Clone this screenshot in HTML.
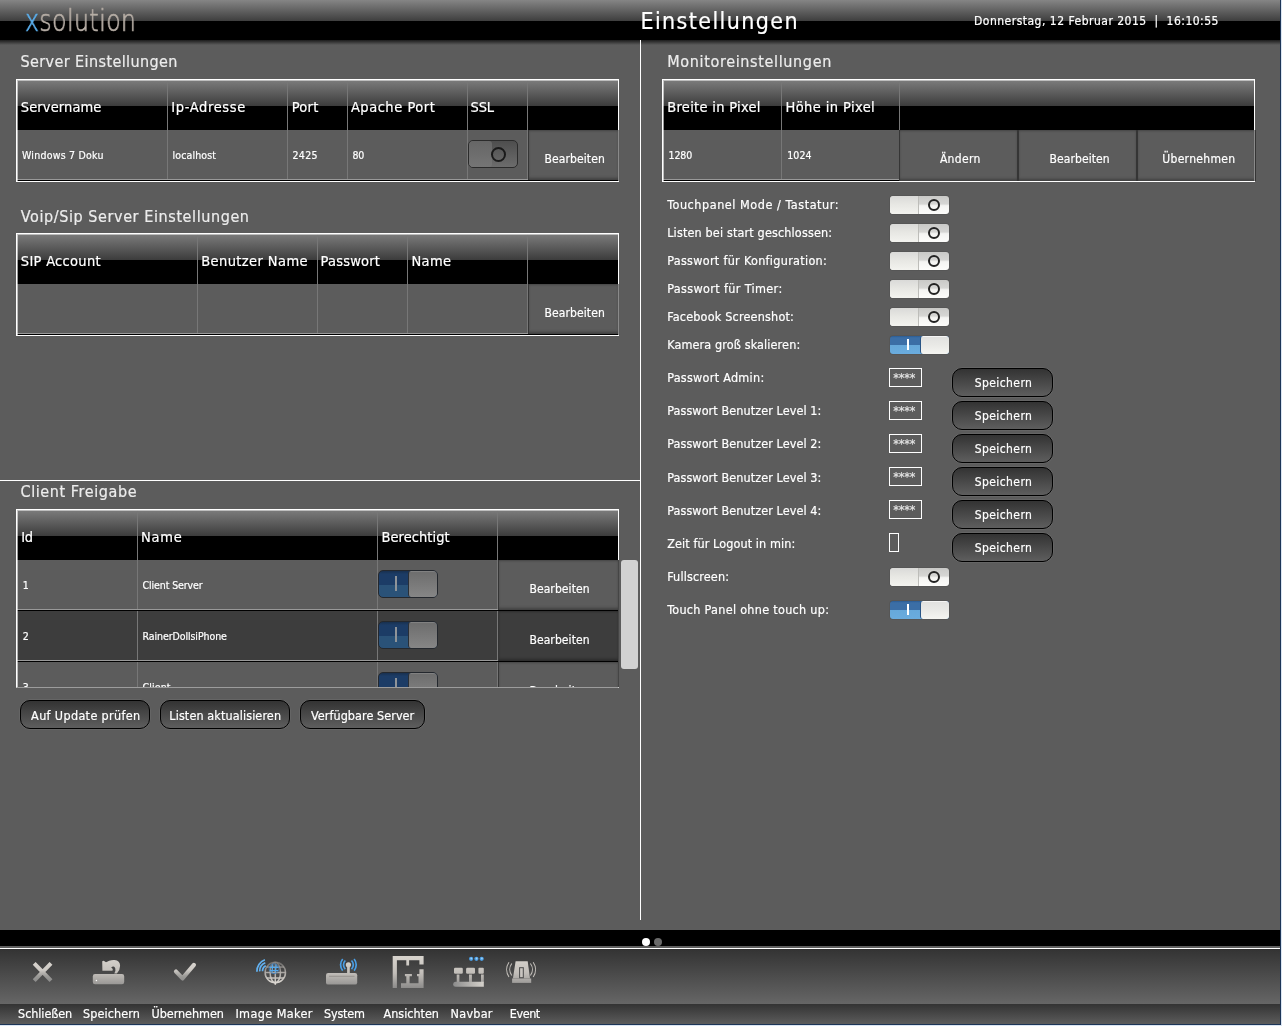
<!DOCTYPE html>
<html lang="de"><head><meta charset="utf-8"><title>Einstellungen</title>
<style>
html,body{margin:0;padding:0;background:#5c5c5c;overflow:hidden}
#app{position:relative;width:1282px;height:1026px;overflow:hidden;background:#5c5c5c;font-family:"DejaVu Sans Condensed","DejaVu Sans","Liberation Sans",sans-serif;font-stretch:condensed}
#app div,#app span,#app svg{position:absolute;box-sizing:border-box}
span.t{white-space:pre;-webkit-text-stroke:.2px}
.hdr{left:0;top:0;width:1280px;height:40px;background:linear-gradient(#858585 0,#3e3e3e 21px,#000 21px)}
.hdrsh{left:0;top:40px;width:1280px;height:5px;background:linear-gradient(#1c1c1c,#5c5c5c)}
.edgeR1{left:1280px;top:0;width:1px;height:1026px;background:#1d3557}
.edgeR2{left:1281px;top:0;width:1px;height:1026px;background:#dbe6f3}
.edgeB1{left:0;top:1024px;width:1281px;height:1px;background:#1d3557}
.edgeB2{left:0;top:1025px;width:1282px;height:1px;background:#dbe6f3}
.vline{left:640px;top:40px;width:1px;height:880px;background:#fff}
.hline{left:0;top:480px;width:640px;height:1px;background:#fff}
.tbl{border:1px solid #fff}
.th{left:0;top:0;right:0;height:50px;background:linear-gradient(#7c7c7c 0,#3c3c3c 26px,#000 26px)}
.vs{top:0;bottom:0;width:1px;background:#777}
.rowb1{left:0;right:0;height:1px;background:#999}
.rowb2{left:0;right:0;height:1px;background:#000}
.cbtn{background:#5c5c5c;box-shadow:inset 0 -3px 3px -1px rgba(0,0,0,.3),inset 0 2px 2px -1px rgba(0,0,0,.25);border-left:1px solid #353535;border-right:1px solid #353535}
.bbar{left:0;top:930px;width:1280px;height:16px;background:#000}
.bl1{left:0;top:946px;width:1280px;height:2px;background:#5e5e5e}
.bl2{left:0;top:948px;width:1280px;height:1px;background:#fff}
.tb1{left:0;top:949px;width:1280px;height:55px;background:linear-gradient(#333,#666)}
.tb2{left:0;top:1004px;width:1280px;height:20px;background:linear-gradient(#333,#5c5c5c)}
.dot{width:8px;height:8px;border-radius:4px;top:938px}
.pbtn{border:1px solid #000;border-radius:10px;background:linear-gradient(#333,#5e5e5e);box-shadow:0 0 0 .5px rgba(255,255,255,.12)}
.pw{border:1px solid #fff;width:33px;height:19px}
/* light toggles */
.tg{width:59px;height:18px;border-radius:3px;overflow:hidden;box-shadow:0 0 1px rgba(0,0,0,.6)}
.tg.off{background:linear-gradient(#c9c9c7 0,#d6d6d4 44%,#f4f4f2 54%,#fdfdfb 100%)}
.tg.off i{position:absolute;left:0;top:0;width:28px;height:18px;background:linear-gradient(#dadad8,#e8e8e4 50%,#f3f3ef);border-right:1px solid #bdbdb9;border-radius:3px 0 0 3px}
.tg.off b{position:absolute;left:37.5px;top:2.5px;width:12px;height:12px;border:2px solid #222;border-radius:6px;box-sizing:border-box}
.tg.on{background:linear-gradient(#2b5b92 0,#3b6ea6 10%,#3b6ea6 50%,#66a8da 50%,#6aacde 100%)}
.tg.on i{position:absolute;left:30px;top:0;width:29px;height:18px;background:linear-gradient(#fff 0,#e2e2e0 8%,#e9e9e6 50%,#f5f5f1);border-radius:3px;border-left:1px solid #2a5585}
.tg.on b{position:absolute;left:17px;top:3px;width:2px;height:11px;background:#fff}
/* dark toggles */
.row2{background:#3d3d3d}
.cbtn.dk{background:#3d3d3d}
.sb{background:#d2d2d2;border-radius:3px}
.dg{width:60px;height:28px;border-radius:5px;border:1px solid #24282e;overflow:hidden}
.dg.don{background:linear-gradient(#18304f 0,#1c3c66 12%,#1c3c66 52%,#2a5278 52%,#2a5278 100%)}
.dg.don i{position:absolute;left:29px;top:0;width:29px;height:26px;background:linear-gradient(#8a8a8a 0,#6e6e6e 6%,#868686);border-left:1px solid #2a2f36;border-radius:3px}
.dg.don b{position:absolute;left:16px;top:5px;width:2px;height:15px;background:#8f9499}
.dg.doff{width:50px;border-color:#2b2b2b;background:linear-gradient(#4e4e4e,#6c6c6c)}
.dg.doff i{position:absolute;left:0;top:0;width:23px;height:26px;background:linear-gradient(#666,#757575);border-radius:3px}
.dg.doff b{position:absolute;left:22px;top:5.5px;width:15px;height:15px;border:2px solid #1a1a1a;border-radius:8px;box-sizing:border-box}
.clip3{left:0;top:0;width:1282px;height:687px;overflow:hidden}
.logo{will-change:transform;font-stretch:normal;left:25px;top:3px;font-family:"DejaVu Sans Light","DejaVu Sans","Liberation Sans",sans-serif;font-weight:200;font-size:30px;line-height:35px;color:#b7aea6;white-space:pre;-webkit-text-stroke:.7px;letter-spacing:.6px;transform:scaleX(.785);transform-origin:0 0}
.t3{border-bottom-color:#9c9c9c}
.t3r{left:618px;top:560px;width:1px;height:127px;background:#454545}
.txt{left:0;top:0;width:1282px;height:1026px;will-change:transform}
.rb{width:1px;background:#8a8a8a}
.tbl::after{content:"";position:absolute;left:0;top:0;right:0;bottom:0;border-left:1px solid rgba(255,255,255,.6);border-top:1px solid rgba(255,255,255,.5);pointer-events:none}

</style></head><body>
<div id="app">
<div class="hdr"></div><div class="hdrsh"></div>
<div class="vline"></div><div class="hline"></div>
<span class="logo"><span style="position:static;color:#5aaeec">x</span>solution</span>
<div class="tbl" style="left:16px;top:79px;width:603px;height:103px">
<div class="th"></div>
<div class="vs" style="left:150px"></div>
<div class="vs" style="left:270px"></div>
<div class="vs" style="left:330px"></div>
<div class="vs" style="left:450px"></div>
<div class="vs" style="left:510px"></div>
<div class="rowb1" style="top:99px"></div><div class="rowb2" style="top:100px"></div>
<div class="cbtn" style="left:511px;top:50px;width:91px;height:50px"></div>
<div class="dg doff" style="left:451px;top:60px"><i></i><b></b></div>
</div>
<div class="tbl" style="left:16px;top:233px;width:603px;height:103px">
<div class="th"></div>
<div class="vs" style="left:180px"></div>
<div class="vs" style="left:300px"></div>
<div class="vs" style="left:390px"></div>
<div class="vs" style="left:510px"></div>
<div class="rowb1" style="top:99px"></div><div class="rowb2" style="top:100px"></div>
<div class="cbtn" style="left:511px;top:50px;width:91px;height:50px"></div>
</div>
<div class="tbl t3" style="left:16px;top:509px;width:603px;height:179px;overflow:hidden">
<div class="row2" style="left:0;right:0;top:101px;height:51px"></div>
<div class="th"></div>
<div class="vs" style="left:120px"></div>
<div class="vs" style="left:360px"></div>
<div class="vs" style="left:480px"></div>
<div class="rowb1" style="top:99px"></div><div class="rowb2" style="top:100px"></div>
<div class="cbtn" style="left:481px;top:50px;width:121px;height:50px"></div>
<div class="dg don" style="left:361px;top:60px"><i></i><b></b></div>
<div class="rowb1" style="top:150px"></div><div class="rowb2" style="top:151px"></div>
<div class="cbtn dk" style="left:481px;top:101px;width:121px;height:50px"></div>
<div class="dg don" style="left:361px;top:111px"><i></i><b></b></div>
<div class="rowb1" style="top:201px"></div><div class="rowb2" style="top:202px"></div>
<div class="cbtn" style="left:481px;top:152px;width:121px;height:50px"></div>
<div class="dg don" style="left:361px;top:162px"><i></i><b></b></div>
</div>
<div class="t3r"></div>
<div class="sb" style="left:621px;top:560px;width:17px;height:109px"></div>
<div class="tbl" style="left:662px;top:79px;width:593px;height:103px">
<div class="th"></div>
<div class="vs" style="left:118px"></div>
<div class="vs" style="left:236px"></div>
<div class="rowb1" style="top:99px;width:237px;right:auto"></div><div class="rowb2" style="top:100px;width:237px;right:auto"></div>
<div class="cbtn" style="left:236px;top:50px;width:119px;height:51px"></div>
<div class="cbtn" style="left:355px;top:50px;width:119px;height:51px"></div>
<div class="cbtn" style="left:474px;top:50px;width:119px;height:51px"></div>
</div>
<div class="rb" style="left:618px;top:130px;height:51px"></div>
<div class="rb" style="left:618px;top:284px;height:51px"></div>
<div class="rb" style="left:1254px;top:130px;height:51px"></div>
<div class="tg off" style="left:890px;top:196px"><i></i><b></b></div>
<div class="tg off" style="left:890px;top:224px"><i></i><b></b></div>
<div class="tg off" style="left:890px;top:252px"><i></i><b></b></div>
<div class="tg off" style="left:890px;top:280px"><i></i><b></b></div>
<div class="tg off" style="left:890px;top:308px"><i></i><b></b></div>
<div class="tg on" style="left:890px;top:336px"><i></i><b></b></div>
<div class="tg off" style="left:890px;top:568px"><i></i><b></b></div>
<div class="tg on" style="left:890px;top:601px"><i></i><b></b></div>
<div class="pw" style="left:889px;top:368px"></div>
<div class="pw" style="left:889px;top:401px"></div>
<div class="pw" style="left:889px;top:434px"></div>
<div class="pw" style="left:889px;top:467px"></div>
<div class="pw" style="left:889px;top:500px"></div>
<div class="pw" style="left:889px;top:533px;width:10px;height:19px"></div>
<div class="pbtn" style="left:952px;top:368px;width:101px;height:29px"></div>
<div class="pbtn" style="left:952px;top:401px;width:101px;height:29px"></div>
<div class="pbtn" style="left:952px;top:434px;width:101px;height:29px"></div>
<div class="pbtn" style="left:952px;top:467px;width:101px;height:29px"></div>
<div class="pbtn" style="left:952px;top:500px;width:101px;height:29px"></div>
<div class="pbtn" style="left:952px;top:533px;width:101px;height:29px"></div>
<div class="pbtn" style="left:20px;top:700px;width:130px;height:29px"></div>
<div class="pbtn" style="left:160px;top:700px;width:130px;height:29px"></div>
<div class="pbtn" style="left:300px;top:700px;width:125px;height:29px"></div>
<div class="bbar"></div><div class="bl1"></div><div class="bl2"></div><div class="tb1"></div><div class="tb2"></div>
<div class="dot" style="left:642px;background:#fff"></div><div class="dot" style="left:654px;background:#6a6a6a"></div>
<svg class="ico" style="left:0;top:949px" width="1280" height="55" viewBox="0 949 1280 55">
<defs>
<linearGradient id="ig" gradientUnits="userSpaceOnUse" x1="0" y1="958" x2="0" y2="988"><stop offset="0" stop-color="#d6d2cc"/><stop offset=".5" stop-color="#c2beb9"/><stop offset="1" stop-color="#8c8b8a"/></linearGradient>
<linearGradient id="ig2" gradientUnits="userSpaceOnUse" x1="0" y1="961" x2="0" y2="983"><stop offset="0" stop-color="#d9d5cf"/><stop offset=".42" stop-color="#cdc9c4"/><stop offset=".68" stop-color="#9c9b98"/><stop offset="1" stop-color="#878787"/></linearGradient>
<linearGradient id="ih" gradientUnits="userSpaceOnUse" x1="453" y1="0" x2="484" y2="0"><stop offset="0" stop-color="#8c8c8c"/><stop offset="1" stop-color="#d6d2cc"/></linearGradient>
<linearGradient id="gg" gradientUnits="userSpaceOnUse" x1="0" y1="961" x2="0" y2="984"><stop offset="0" stop-color="#8a8885" stop-opacity=".55"/><stop offset=".5" stop-color="#b4b0ac" stop-opacity=".9"/><stop offset="1" stop-color="#e0dcd6"/></linearGradient>
</defs>
<!-- close -->
<g stroke="url(#ig2)" stroke-width="4" stroke-linecap="butt" fill="none">
<path d="M34.2 963.3L51 980.7M51 963.3L34.2 980.7"/>
</g>
<!-- save -->
<g fill="url(#ig)">
<path d="M95 974h27q2.2 0 2.2 2.4v5.500q0 2.300-2.200 2.300H95q-2.200 0-2.200-2.300v-5.500q0-2.400 2.200-2.400z"/>
<path d="M102.2 961.2l1.500-.5 2.300 1.600 3.200-1.600q2.700-.9 5.300-.7 5.600.6 5.600 5.800 0 4.300-3.200 7.800h-2.600q1.700-2.700 1-5.100-.6-1.800-1.800-2-1.300-.1-2.300 1l1.600 1.500-.3 1.800h-10.100z"/>
</g>
<circle cx="96.4" cy="980.5" r=".7" fill="#fff"/>
<!-- apply -->
<path d="M176 971.600l6.500 6.800 11.400-13.500" stroke="url(#ig2)" stroke-width="4.2" stroke-linecap="round" stroke-linejoin="round" fill="none"/>
<!-- image maker -->
<g fill="none" stroke="url(#gg)" stroke-width="1.500">
<circle cx="275.3" cy="972.5" r="10.2"/>
<ellipse cx="275.3" cy="972.5" rx="5.2" ry="10.2"/>
<path d="M275.3 962.3v22.500M265.1 972.5h20.400M266.700 967h17.200M266.700 978h17.200"/>
</g>
<g fill="none" stroke="#55a8ea" stroke-width="1.200">
<circle cx="274" cy="968.7" r="4.900" stroke="#3f7fc0" stroke-width="1" stroke-opacity=".8"/>
<path d="M269.600 967.300h8.800M269.800 970.500h8.400M272.800 964.600l-.8 7.800M276.200 964.600l-.8 7.800"/>
<path d="M264.900 959.800a12 12 0 0 0-8 11.900M265.300 962.800a9 9 0 0 0-5.600 8.600M265.800 965.800a6 6 0 0 0-3.300 5.400" stroke-width="1.700" stroke="#62b1f0"/>
</g>
<!-- system -->
<g fill="url(#ig)">
<rect x="326" y="973" width="31.2" height="11.6" rx="2.2"/>
<rect x="347.1" y="966" width="2.7" height="8"/>
<circle cx="348.4" cy="964.8" r="2.6"/>
</g>
<path d="M329 976.300h25.5" stroke="#8f8c88" stroke-width=".8"/>
<g fill="none" stroke="#4a9fe6" stroke-width="1.700">
<path d="M345.3 960.500a6 6 0 0 0 0 8.600M342.7 959a9 9 0 0 0 0 11.600M351.5 960.500a6 6 0 0 1 0 8.600M354.1 959a9 9 0 0 1 0 11.6"/>
</g>
<!-- ansichten -->
<g fill="url(#ig)">
<path d="M392.7 956.100h30.900v8.400h-4.200v-4.200h-10.300v5.100h-2.800v-5.100h-9.400v27.600h-4.200z"/>
<path d="M419.4 969.200h4.200v18.700h-22.600v-4.700h5.300v-7h-1.400v-2.300h7v2.300h-2.300v7h8.900v-7h-1.500v-2.300h2.400z"/>
</g>
<!-- navbar -->
<g fill="url(#ig)">
<rect x="454" y="967.8" width="8.8" height="6" rx="1.3"/>
<rect x="466.1" y="967.8" width="8.9" height="6" rx="1.3"/>
<rect x="478.4" y="967.8" width="5.4" height="6" rx="1"/>
<rect x="456.7" y="974.5" width="2.7" height="8"/>
<rect x="469" y="974.5" width="2.9" height="8"/>
<rect x="481" y="974.5" width="2.8" height="8"/>
</g>
<path d="M455.7 981.800h28.100v5h-28.100q-2.5 0-2.5-2.500t2.5-2.500z" fill="url(#ih)"/>
<g fill="#4a9fe6"><circle cx="471.1" cy="958.8" r="2.1"/><circle cx="476.4" cy="958.8" r="2.1"/><circle cx="481.7" cy="958.8" r="2.1"/></g>
<g fill="#9fd0f5"><circle cx="471.3" cy="958.5" r=".9"/><circle cx="476.6" cy="958.5" r=".9"/><circle cx="481.9" cy="958.5" r=".9"/></g>
<!-- event -->
<g fill="url(#ig)">
<path d="M515.6 961.300h12.100l2.3 17.200h-17.100z"/>
<rect x="512.1" y="978.5" width="19.1" height="4.4"/>
</g>
<rect x="519.6" y="967.7" width="3.7" height="10" fill="#c9c5c0" stroke="#4a4a4a" stroke-width="1"/>
<g fill="none" stroke="#c4c0bb" stroke-width="1.1">
<path d="M511.8 963.500a10 10 0 0 0 0 12M509 962.200a13 13 0 0 0 0 14.800M530.4 963.500a10 10 0 0 1 0 12M533.2 962.200a13 13 0 0 1 0 14.8"/>
</g>
</svg>

<div class="edgeR1"></div><div class="edgeR2"></div><div class="edgeB1"></div><div class="edgeB2"></div>
<div class="txt">
<span class="t" style="left:640.50px;top:8px;font-size:23px;line-height:26px;color:#fff;letter-spacing:1.392px;">Einstellungen</span>
<span class="t" style="left:974.00px;top:14px;font-size:12px;line-height:14px;color:#fff;letter-spacing:0.496px;">Donnerstag, 12 Februar 2015  |  16:10:55</span>
<span class="t" style="left:20.50px;top:52px;font-size:16px;line-height:19px;color:#ececec;letter-spacing:0.401px;">Server Einstellungen</span>
<span class="t" style="left:20.80px;top:207px;font-size:16px;line-height:19px;color:#ececec;letter-spacing:0.592px;">Voip/Sip Server Einstellungen</span>
<span class="t" style="left:20.50px;top:482px;font-size:16px;line-height:19px;color:#ececec;letter-spacing:0.589px;">Client Freigabe</span>
<span class="t" style="left:667.30px;top:52px;font-size:16px;line-height:19px;color:#ececec;letter-spacing:0.646px;">Monitoreinstellungen</span>
<span class="t" style="left:20.80px;top:99px;font-size:14.5px;line-height:16px;color:#fff;letter-spacing:0.119px;">Servername</span>
<span class="t" style="left:171.30px;top:99px;font-size:14.5px;line-height:16px;color:#fff;letter-spacing:0.648px;">Ip-Adresse</span>
<span class="t" style="left:291.70px;top:99px;font-size:14.5px;line-height:16px;color:#fff;letter-spacing:0.263px;">Port</span>
<span class="t" style="left:350.90px;top:99px;font-size:14.5px;line-height:16px;color:#fff;letter-spacing:0.528px;">Apache Port</span>
<span class="t" style="left:470.60px;top:99px;font-size:14.5px;line-height:16px;color:#fff;letter-spacing:-0.222px;">SSL</span>
<span class="t" style="left:22.00px;top:149px;font-size:10.5px;line-height:12px;color:#fff;letter-spacing:0.242px;">Windows 7 Doku</span>
<span class="t" style="left:172.50px;top:149px;font-size:10.5px;line-height:12px;color:#fff;letter-spacing:0.137px;">localhost</span>
<span class="t" style="left:292.40px;top:149px;font-size:10.5px;line-height:12px;color:#fff;letter-spacing:0.384px;">2425</span>
<span class="t" style="left:352.60px;top:149px;font-size:10.5px;line-height:12px;color:#fff;letter-spacing:-0.431px;">80</span>
<span class="t" style="left:544.40px;top:152px;font-size:12px;line-height:14px;color:#fff;letter-spacing:0.119px;">Bearbeiten</span>
<span class="t" style="left:20.80px;top:253px;font-size:14.5px;line-height:16px;color:#fff;letter-spacing:0.302px;">SIP Account</span>
<span class="t" style="left:201.20px;top:253px;font-size:14.5px;line-height:16px;color:#fff;letter-spacing:0.408px;">Benutzer Name</span>
<span class="t" style="left:320.60px;top:253px;font-size:14.5px;line-height:16px;color:#fff;letter-spacing:0.209px;">Passwort</span>
<span class="t" style="left:411.50px;top:253px;font-size:14.5px;line-height:16px;color:#fff;letter-spacing:0.333px;">Name</span>
<span class="t" style="left:544.40px;top:306px;font-size:12px;line-height:14px;color:#fff;letter-spacing:0.119px;">Bearbeiten</span>
<span class="t" style="left:667.25px;top:99px;font-size:14.5px;line-height:16px;color:#fff;letter-spacing:0.299px;">Breite in Pixel</span>
<span class="t" style="left:785.50px;top:99px;font-size:14.5px;line-height:16px;color:#fff;letter-spacing:0.406px;">Höhe in Pixel</span>
<span class="t" style="left:668.50px;top:149px;font-size:10.5px;line-height:12px;color:#fff;letter-spacing:-0.099px;">1280</span>
<span class="t" style="left:787.25px;top:149px;font-size:10.5px;line-height:12px;color:#fff;letter-spacing:0.068px;">1024</span>
<span class="t" style="left:939.90px;top:152px;font-size:12px;line-height:14px;color:#fff;letter-spacing:0.341px;">Ändern</span>
<span class="t" style="left:1049.50px;top:152px;font-size:12px;line-height:14px;color:#fff;letter-spacing:0.097px;">Bearbeiten</span>
<span class="t" style="left:1162.30px;top:152px;font-size:12px;line-height:14px;color:#fff;letter-spacing:0.303px;">Übernehmen</span>
<span class="t" style="left:667.20px;top:197px;font-size:12.5px;line-height:15px;color:#fff;letter-spacing:0.550px;">Touchpanel Mode / Tastatur:</span>
<span class="t" style="left:667.20px;top:225px;font-size:12.5px;line-height:15px;color:#fff;letter-spacing:0.154px;">Listen bei start geschlossen:</span>
<span class="t" style="left:667.20px;top:253px;font-size:12.5px;line-height:15px;color:#fff;letter-spacing:0.303px;">Passwort für Konfiguration:</span>
<span class="t" style="left:667.20px;top:281px;font-size:12.5px;line-height:15px;color:#fff;letter-spacing:0.363px;">Passwort für Timer:</span>
<span class="t" style="left:667.20px;top:309px;font-size:12.5px;line-height:15px;color:#fff;letter-spacing:0.194px;">Facebook Screenshot:</span>
<span class="t" style="left:667.20px;top:337px;font-size:12.5px;line-height:15px;color:#fff;letter-spacing:0.122px;">Kamera groß skalieren:</span>
<span class="t" style="left:667.20px;top:370px;font-size:12.5px;line-height:15px;color:#fff;letter-spacing:0.277px;">Passwort Admin:</span>
<span class="t" style="left:667.20px;top:403px;font-size:12.5px;line-height:15px;color:#fff;letter-spacing:0.084px;">Passwort Benutzer Level 1:</span>
<span class="t" style="left:667.20px;top:436px;font-size:12.5px;line-height:15px;color:#fff;letter-spacing:0.084px;">Passwort Benutzer Level 2:</span>
<span class="t" style="left:667.20px;top:470px;font-size:12.5px;line-height:15px;color:#fff;letter-spacing:0.084px;">Passwort Benutzer Level 3:</span>
<span class="t" style="left:667.20px;top:503px;font-size:12.5px;line-height:15px;color:#fff;letter-spacing:0.084px;">Passwort Benutzer Level 4:</span>
<span class="t" style="left:667.20px;top:536px;font-size:12.5px;line-height:15px;color:#fff;letter-spacing:0.101px;">Zeit für Logout in min:</span>
<span class="t" style="left:667.20px;top:569px;font-size:12.5px;line-height:15px;color:#fff;letter-spacing:0.147px;">Fullscreen:</span>
<span class="t" style="left:667.20px;top:602px;font-size:12.5px;line-height:15px;color:#fff;letter-spacing:0.293px;">Touch Panel ohne touch up:</span>
<span class="t" style="left:974.80px;top:376px;font-size:12px;line-height:14px;color:#fff;letter-spacing:0.405px;">Speichern</span>
<span class="t" style="left:974.80px;top:409px;font-size:12px;line-height:14px;color:#fff;letter-spacing:0.405px;">Speichern</span>
<span class="t" style="left:974.80px;top:442px;font-size:12px;line-height:14px;color:#fff;letter-spacing:0.405px;">Speichern</span>
<span class="t" style="left:974.80px;top:475px;font-size:12px;line-height:14px;color:#fff;letter-spacing:0.405px;">Speichern</span>
<span class="t" style="left:974.80px;top:508px;font-size:12px;line-height:14px;color:#fff;letter-spacing:0.405px;">Speichern</span>
<span class="t" style="left:974.80px;top:541px;font-size:12px;line-height:14px;color:#fff;letter-spacing:0.405px;">Speichern</span>
<span class="t" style="left:893.20px;top:370px;font-size:12.5px;line-height:15px;color:#e6e6e6;letter-spacing:-0.067px;-webkit-text-stroke:.15px;">****</span>
<span class="t" style="left:893.20px;top:403px;font-size:12.5px;line-height:15px;color:#e6e6e6;letter-spacing:-0.067px;-webkit-text-stroke:.15px;">****</span>
<span class="t" style="left:893.20px;top:436px;font-size:12.5px;line-height:15px;color:#e6e6e6;letter-spacing:-0.067px;-webkit-text-stroke:.15px;">****</span>
<span class="t" style="left:893.20px;top:469px;font-size:12.5px;line-height:15px;color:#e6e6e6;letter-spacing:-0.067px;-webkit-text-stroke:.15px;">****</span>
<span class="t" style="left:893.20px;top:502px;font-size:12.5px;line-height:15px;color:#e6e6e6;letter-spacing:-0.067px;-webkit-text-stroke:.15px;">****</span>
<span class="t" style="left:21.30px;top:529px;font-size:14.5px;line-height:16px;color:#fff;letter-spacing:-0.441px;">Id</span>
<span class="t" style="left:141.00px;top:529px;font-size:14.5px;line-height:16px;color:#fff;letter-spacing:0.733px;">Name</span>
<span class="t" style="left:381.40px;top:529px;font-size:14.5px;line-height:16px;color:#fff;letter-spacing:0.075px;">Berechtigt</span>
<span class="t" style="left:31.10px;top:708px;font-size:12.5px;line-height:15px;color:#fff;letter-spacing:0.347px;">Auf Update prüfen</span>
<span class="t" style="left:169.30px;top:708px;font-size:12.5px;line-height:15px;color:#fff;letter-spacing:0.108px;">Listen aktualisieren</span>
<span class="t" style="left:311.00px;top:708px;font-size:12.5px;line-height:15px;color:#fff;letter-spacing:0.060px;">Verfügbare Server</span>
<span class="t" style="left:18.10px;top:1006px;font-size:12.5px;line-height:15px;color:#fff;letter-spacing:-0.083px;">Schließen</span>
<span class="t" style="left:83.10px;top:1006px;font-size:12.5px;line-height:15px;color:#fff;letter-spacing:0.101px;">Speichern</span>
<span class="t" style="left:151.50px;top:1006px;font-size:12.5px;line-height:15px;color:#fff;letter-spacing:-0.043px;">Übernehmen</span>
<span class="t" style="left:235.40px;top:1006px;font-size:12.5px;line-height:15px;color:#fff;letter-spacing:0.410px;">Image Maker</span>
<span class="t" style="left:324.00px;top:1006px;font-size:12.5px;line-height:15px;color:#fff;letter-spacing:-0.188px;">System</span>
<span class="t" style="left:383.50px;top:1006px;font-size:12.5px;line-height:15px;color:#fff;letter-spacing:-0.010px;">Ansichten</span>
<span class="t" style="left:450.60px;top:1006px;font-size:12.5px;line-height:15px;color:#fff;letter-spacing:0.258px;">Navbar</span>
<span class="t" style="left:509.75px;top:1006px;font-size:12.5px;line-height:15px;color:#fff;letter-spacing:-0.430px;">Event</span>
<div class="clip3">
<span class="t" style="left:22.80px;top:579px;font-size:10.5px;line-height:12px;color:#fff;">1</span>
<span class="t" style="left:142.50px;top:579px;font-size:10.5px;line-height:12px;color:#fff;letter-spacing:-0.095px;">Client Server</span>
<span class="t" style="left:529.40px;top:582px;font-size:12px;line-height:14px;color:#fff;letter-spacing:0.097px;">Bearbeiten</span>
<span class="t" style="left:22.80px;top:630px;font-size:10.5px;line-height:12px;color:#fff;">2</span>
<span class="t" style="left:142.50px;top:630px;font-size:10.5px;line-height:12px;color:#fff;letter-spacing:-0.072px;">RainerDollsiPhone</span>
<span class="t" style="left:529.40px;top:633px;font-size:12px;line-height:14px;color:#fff;letter-spacing:0.097px;">Bearbeiten</span>
<span class="t" style="left:22.80px;top:681px;font-size:10.5px;line-height:12px;color:#fff;">3</span>
<span class="t" style="left:142.50px;top:681px;font-size:10.5px;line-height:12px;color:#fff;letter-spacing:0.128px;">Client</span>
<span class="t" style="left:529.40px;top:684px;font-size:12px;line-height:14px;color:#fff;letter-spacing:0.097px;">Bearbeiten</span>
</div>
</div>
</div>
</body></html>
